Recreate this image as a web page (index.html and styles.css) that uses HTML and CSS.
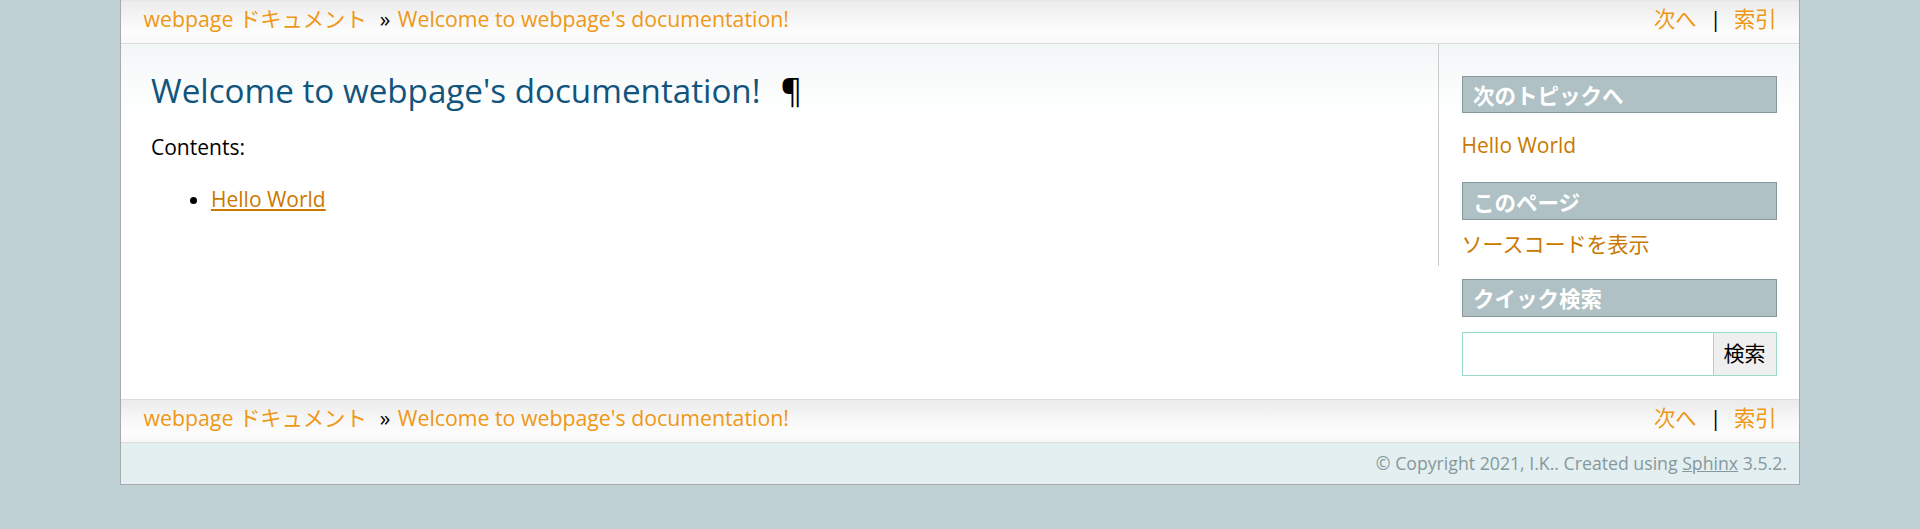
FILE: index.html
```html
<!DOCTYPE html>
<html lang="ja">
<head>
<meta charset="utf-8">
<title>Welcome to webpage's documentation! — webpage ドキュメント</title>
<link rel="stylesheet" href="styles.css">
</head>
<body>
<div class="related related-top">
  <ul class="related-list">
    <li class="nav-item"><a href="#">webpage ドキュメント</a> &#187;</li>
    <li class="nav-item"><a href="#">Welcome to webpage's documentation!</a></li>
    <li class="right-group">
      <span class="right-item"><a href="#">次へ</a> |</span>
      <span class="right-item right-last"><a href="#">索引</a></span>
    </li>
  </ul>
</div>

<div class="document">
  <div class="bodywrapper">
    <div class="body">
      <h1 class="title">Welcome to webpage's documentation!<a class="headerlink" href="#">¶</a></h1>
      <p class="caption">Contents:</p>
      <ul class="toctree">
        <li><a href="#">Hello World</a></li>
      </ul>
    </div>
  </div>
  <div class="sphinxsidebar">
    <h3 class="side-title">次のトピックへ</h3>
    <p class="topless"><a href="#">Hello World</a></p>
    <h3 class="side-title">このページ</h3>
    <ul class="this-page-menu">
      <li><a href="#">ソースコードを表示</a></li>
    </ul>
    <h3 class="side-title">クイック検索</h3>
    <form class="search">
      <input class="search-text" type="text" name="q" aria-label="search">
      <input class="search-submit" type="submit" value="検索">
    </form>
  </div>
</div>

<div class="related related-bottom">
  <ul class="related-list">
    <li class="nav-item"><a href="#">webpage ドキュメント</a> &#187;</li>
    <li class="nav-item"><a href="#">Welcome to webpage's documentation!</a></li>
    <li class="right-group">
      <span class="right-item"><a href="#">次へ</a> |</span>
      <span class="right-item right-last"><a href="#">索引</a></span>
    </li>
  </ul>
</div>

<div class="footer">
  &#169; Copyright 2021, I.K.. Created using <a href="#">Sphinx</a> 3.5.2.
</div>
</body>
</html>
```

FILE: styles.css
```css
html {
  background: #bfd1d4;
}

body {
  margin: 0 120px;
  padding: 0;
  border: 1px solid #aaa;
  border-top: 0;
  background: #bfd1d4;
  color: #000;
  font-family: "Open Sans", "Noto Sans CJK JP", sans-serif;
  font-size: 21px;
  letter-spacing: 0;
  line-height: 1.5;
}

a {
  color: #ca7900;
  text-decoration: none;
}

/* related bars */
.related-list {
  display: flex;
  align-items: flex-start;
  margin: 0;
  padding: 0 0 0 15px;
  list-style: none;
  height: 42px;
  border-top: 1px solid #ddd;
  border-bottom: 1px solid #ddd;
  background: linear-gradient(to bottom, #ebebeb 0%, #f7f7f7 45%, #fcfcfc 75%, #f8f8f8 100%);
  line-height: 36.75px;
  font-size: 21.3px;
}

.related-top .related-list {
  border-top-color: #e6e6e6;
}

.nav-item,
.right-group {
  white-space: pre;
}

.nav-item a,
.right-item a {
  color: #ee9816;
  padding: 0 7.5px;
}

.right-group {
  margin-left: auto;
  display: flex;
}

.right-item {
  margin-right: 5px;
}

.right-last {
  margin-right: 15px;
}

/* document */
.document {
  display: flex;
  align-items: flex-start;
  background: linear-gradient(to bottom, #f3f6f7 0px, #fdfefe 60px, #ffffff 80px) #fff;
}

.bodywrapper {
  flex: 1;
  border-right: 1px solid #ccc;
}

.body {
  padding: 10.5px 30px 30px 30px;
}

.title {
  margin: 0;
  padding: 12px 0 0 0;
  font-size: 33.2px;
  font-weight: normal;
  line-height: 48px;
  color: #11557c;
}

.headerlink {
  color: #000;
  margin-left: 14px;
  padding: 0 6px;
}

.caption {
  margin: 17.5px 0 20.5px 0;
  line-height: 31.5px;
}

.toctree {
  margin: 0 0 20.5px 0;
  padding-left: 60px;
  line-height: 31.5px;
}

.toctree a {
  text-decoration: underline;
}

/* sidebar */
.sphinxsidebar {
  width: 315px;
  padding: 10.5px 22.5px 23px 22.5px;
}

.side-title {
  margin: 21px 0 10.5px 0;
  padding: 2.1px 0 2.1px 10.5px;
  font-family: "Noto Sans CJK JP", "Open Sans", sans-serif;
  font-size: 21.5px;
  font-weight: bold;
  line-height: 31.5px;
  color: #fff;
  background: #afc1c4;
  border: 1px solid #86989b;
}

.topless {
  margin: 16.8px 0 10.5px 0;
  line-height: 31.5px;
}

.this-page-menu {
  list-style: none;
  margin: 10.5px 0 21px 0;
  padding: 0;
  line-height: 27.3px;
}

.search {
  display: flex;
  margin: 15px 0 0 0;
  height: 44px;
}

.search-text {
  box-sizing: border-box;
  width: 80%;
  height: 44px;
  margin: 0;
  border: 1px solid #98dbcc;
  background: #fff;
  font-size: 21px;
}

.search-submit {
  box-sizing: border-box;
  width: 20%;
  height: 44px;
  margin: 0;
  padding: 0 0 3px 0;
  border: 1px solid #98dbcc;
  border-left: 0;
  background: #efefef;
  color: #000;
  font-family: "Noto Sans CJK JP", sans-serif;
  font-size: 21px;
}

/* footer */
.footer {
  background: #e3eff1;
  color: #86989b;
  padding: 4.5px 12px 4.5px 0;
  font-size: 17.7px;
  line-height: 32px;
  text-align: right;
}

.footer a {
  color: #86989b;
  text-decoration: underline;
}
```
